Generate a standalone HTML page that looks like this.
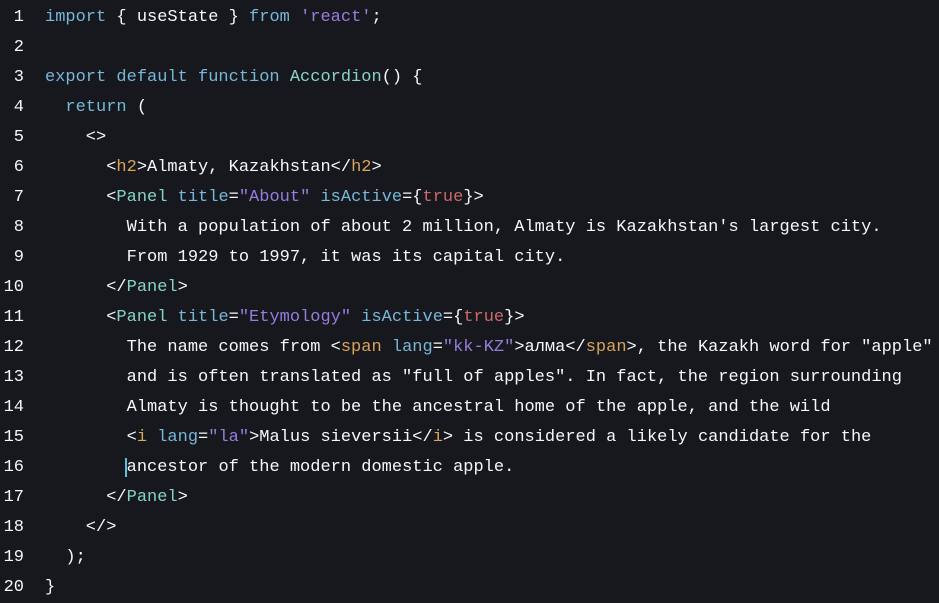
<!DOCTYPE html><html><head><style>
body{margin:0;background:#16181d;width:939px;height:597px;overflow:hidden}
pre{margin:0;padding:3px 0 0 0;font-family:"Liberation Mono",monospace;font-size:17px;line-height:30px;color:#f6f7f9;white-space:pre}
.n{display:inline-block;width:24px;text-align:right;margin-right:21px;color:#f6f7f9}
.k{color:#77b7d7}.c{color:#86d4c6}.t{color:#d9a35a}.s{color:#977cdc}.b{color:#c96a6a}.a{color:#77b7d7}
.cur{border-left:2px solid #58c4dc;margin-left:-2px}
</style></head><body><pre>
<span class="n">1</span><span class="k">import</span> { useState } <span class="k">from</span> <span class="s">'react'</span>;
<span class="n">2</span>
<span class="n">3</span><span class="k">export default function</span> <span class="c">Accordion</span>() {
<span class="n">4</span>  <span class="k">return</span> (
<span class="n">5</span>    &lt;&gt;
<span class="n">6</span>      &lt;<span class="t">h2</span>&gt;Almaty, Kazakhstan&lt;/<span class="t">h2</span>&gt;
<span class="n">7</span>      &lt;<span class="c">Panel</span> <span class="a">title</span>=<span class="s">"About"</span> <span class="a">isActive</span>={<span class="b">true</span>}&gt;
<span class="n">8</span>        With a population of about 2 million, Almaty is Kazakhstan's largest city.
<span class="n">9</span>        From 1929 to 1997, it was its capital city.
<span class="n">10</span>      &lt;/<span class="c">Panel</span>&gt;
<span class="n">11</span>      &lt;<span class="c">Panel</span> <span class="a">title</span>=<span class="s">"Etymology"</span> <span class="a">isActive</span>={<span class="b">true</span>}&gt;
<span class="n">12</span>        The name comes from &lt;<span class="t">span</span> <span class="a">lang</span>=<span class="s">"kk-KZ"</span>&gt;алма&lt;/<span class="t">span</span>&gt;, the Kazakh word for "apple"
<span class="n">13</span>        and is often translated as "full of apples". In fact, the region surrounding
<span class="n">14</span>        Almaty is thought to be the ancestral home of the apple, and the wild
<span class="n">15</span>        &lt;<span class="t">i</span> <span class="a">lang</span>=<span class="s">"la"</span>&gt;Malus sieversii&lt;/<span class="t">i</span>&gt; is considered a likely candidate for the
<span class="n">16</span>        <span class="cur"></span>ancestor of the modern domestic apple.
<span class="n">17</span>      &lt;/<span class="c">Panel</span>&gt;
<span class="n">18</span>    &lt;/&gt;
<span class="n">19</span>  );
<span class="n">20</span>}
</pre></body></html>
